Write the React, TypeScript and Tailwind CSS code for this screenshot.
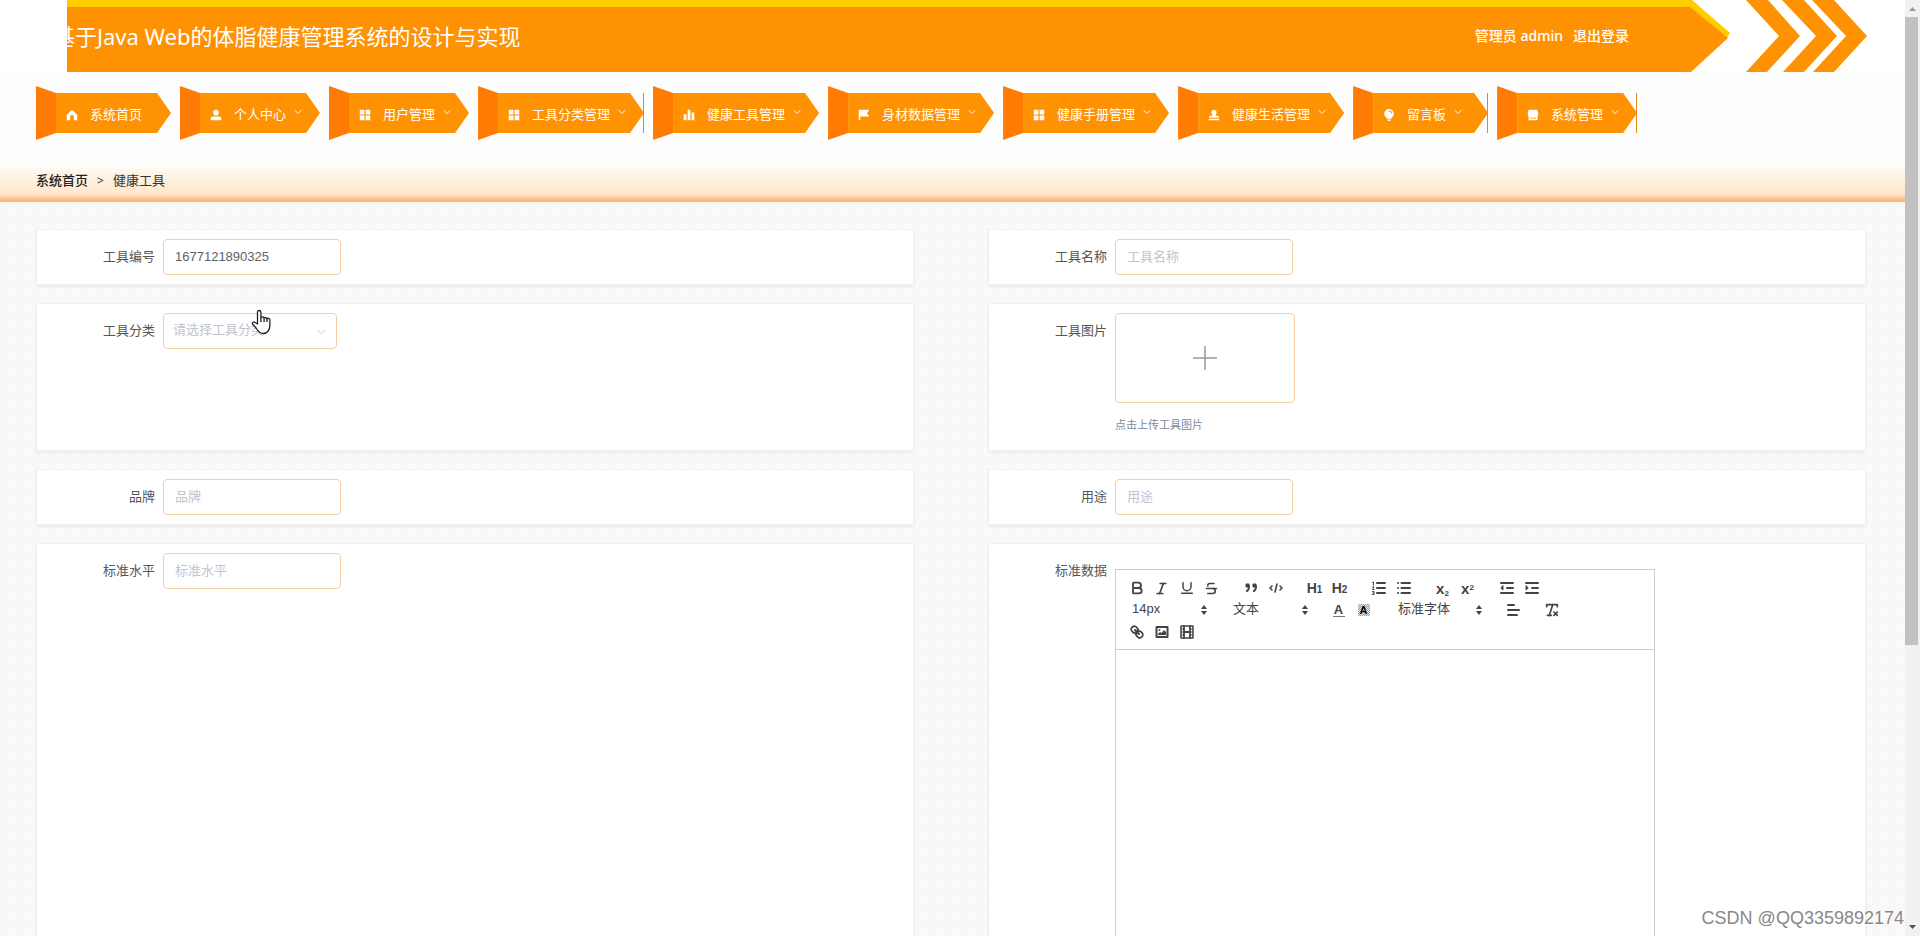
import { ReactNode } from "react"
import { Bold, Italic, Underline, Strikethrough, RemoveFormatting, ChevronDown } from "lucide-react"

const icons: Record<string, ReactNode> = {
    home: <path d="M8 1 1 7.5V15h4.6v-4.5a2.4 2.4 0 0 1 4.8 0V15H15V7.5z" />,
    user: <path d="M8 1a3.8 3.8 0 1 1 0 7.6A3.8 3.8 0 0 1 8 1zM1 15v-2.5C1 10.800 2.500 10 4.500 10h7c2 0 3.500.8 3.500 2.500V15z" />,
    grid: <path d="M1 1h6.200v6.200H1zM8.800 1H15v6.200H8.800zM1 8.800h6.200V15H1zM8.800 8.800H15V15H8.800z" />,
    data: <path d="M1 7h3.600v8H1zM6.200 1h3.600v14H6.200zM11.400 4.500H15V15h-3.600z" />,
    flag: <path d="M1 1h14l-3 4.500 3 4.500H3v5H1z" />,
    stamp: <path d="M8 1a3.600 3.600 0 0 1 2.200 6.400V9h3.300l1.500 2.500H1L2.500 9h3.300V7.400A3.600 3.600 0 0 1 8 1zM1 13h14v2H1z" />,
    bulb: <path d="M8 0a6.300 6.300 0 0 1 3.300 11.700V13H4.700v-1.300A6.300 6.300 0 0 1 8 0zM5.500 14h5l-1 2h-3zM8 2v1.200A3.200 3.200 0 0 1 11.200 6h1.200A4.500 4.500 0 0 0 8 2z" fillRule="evenodd" />,
    shop: <path d="M3 1h10c1 0 2 3 2 5.500 0 1.500-.5 2.500-1 2.500v5q0 1-1 1H3q-1 0-1-1V9C1.500 9 1 8 1 6.500 1 4 2 1 3 1zM4 11.500v1.200h8v-1.200z" fillRule="evenodd" />,
}

const menus = [
    { title: "系统首页", icon: "home", sub: false },
    { title: "个人中心", icon: "user", sub: true },
    { title: "用户管理", icon: "grid", sub: true },
    { title: "工具分类管理", icon: "grid", sub: true, line: true },
    { title: "健康工具管理", icon: "data", sub: true },
    { title: "身材数据管理", icon: "flag", sub: true },
    { title: "健康手册管理", icon: "grid", sub: true },
    { title: "健康生活管理", icon: "stamp", sub: true },
    { title: "留言板", icon: "bulb", sub: true, line: true },
    { title: "系统管理", icon: "shop", sub: true, line: true },
]

const Header = () => {
    return (
        <header className="flex h-[72px] bg-white pl-[67px] pr-[38px] text-white">
            <div className="relative flex flex-1 items-center justify-between">
                <div className="absolute inset-0 bg-[#ffcc00] [clip-path:polygon(0_0,calc(100%_-_38px)_0,100%_33px,calc(100%_-_4px)_39px,0_39px)]"></div>
                <div className="absolute inset-0 bg-[#ff9203] [clip-path:polygon(0_7px,calc(100%_-_40px)_7px,calc(100%_-_2px)_38px,calc(100%_-_39px)_100%,0_100%)]"></div>
                <h1 className="relative -ml-[14px] text-[22px] whitespace-nowrap">基于Java Web的体脂健康管理系统的设计与实现</h1>
                <div className="relative mr-[101px] flex gap-[10px] text-sm font-medium">
                    <span>管理员 admin</span>
                    <a href="#logout">退出登录</a>
                </div>
            </div>
            <svg className="ml-4 h-[72px] w-[121px]" viewBox="0 0 121 72" fill="#ff9203">
                <path d="M0 0h22l32 36-33 36H0l33-36zM36 0h22l33 36-33 36H37l33-36zM66 0h22l33 36-33 36H67l33-36z" />
            </svg>
        </header>
    )
}

const NavItem = ({ title, icon, sub, line }: any) => {
    return (
        <a href="#menu" className="relative flex h-[54px] min-w-[135px]">
            <span className="w-5 bg-[#ff7b03] [clip-path:polygon(0_0,100%_7px,100%_47px,0_100%)]"></span>
            <span className="my-[7px] flex flex-1 items-center bg-[#ff9203] pl-[10px] pr-4 pt-1 [clip-path:polygon(0_0,calc(100%_-_14px)_0,100%_50%,calc(100%_-_14px)_100%,0_100%)]">
                <svg className="mr-3 size-3" viewBox="0 0 16 16" fill="#fff">{icons[icon]}</svg>
                <span className="whitespace-nowrap text-[13px] text-white">{title}</span>
                {sub && <ChevronDown className="-mt-[6px] ml-[6px] size-3 text-white" strokeWidth={2} />}
            </span>
            {line && <span className="absolute inset-y-[7px] right-0 w-px bg-[#e08a1c]"></span>}
        </a>
    )
}

const Card = ({ label, id, children }: any) => {
    return (
        <div className="flex border border-[#f0f0f0] bg-white py-[9px] shadow-[0_2px_4px_rgba(0,0,0,0.06)]">
            <label htmlFor={id} className="h-9 w-[126px] shrink-0 pr-2 text-right text-[13px] leading-9 text-[#555]">{label}</label>
            {children}
        </div>
    )
}

const TextField = ({ label, id, value }: any) => {
    return (
        <Card label={label} id={id}>
            <input id={id} type="text" defaultValue={value} placeholder={label} className="h-9 w-[178px] rounded-sm border border-[#f8cfa5] px-[11px] pb-[2px] text-[13px] text-[#606266] outline-none placeholder:text-[#c0c4cc]" />
        </Card>
    )
}

const Tool = ({ name, children }: any) => {
    return <button type="button" aria-label={name} className="flex h-[22px] w-[25px] items-center justify-center text-[#444]">{children}</button>
}

// 18x18 toolbar glyph
const Glyph = ({ children }: any) => {
    return <svg className="size-[18px]" viewBox="0 0 18 18" fill="none" stroke="#444" strokeWidth="2" strokeLinecap="round" strokeLinejoin="round">{children}</svg>
}

const Picker = ({ name, value, wide }: any) => {
    return (
        <span className={`relative flex h-[22px] items-center ${wide ? "w-[96px]" : "w-[87px]"}`}>
            <select aria-label={name} className="h-full w-full appearance-none bg-transparent pl-2 pb-[3px] text-[13px] text-[#444] outline-none">
                <option>{value}</option>
            </select>
            <svg className="pointer-events-none absolute right-1 top-[6px] h-[10px] w-[6px]" viewBox="0 0 6 10" fill="#444">
                <path d="M3 0 6 4H0zM0 6h6L3 10z" />
            </svg>
        </span>
    )
}

const Editor = () => {
    return (
        <div className="mt-4 flex w-[540px] flex-col">
            <div className="border border-[#ccc] px-2 pb-[6px] pt-[7px]">
                <div className="flex gap-[14px]">
                    <div className="flex">
                        <Tool name="bold"><Bold size={16} strokeWidth={2.75} /></Tool>
                        <Tool name="italic"><Italic size={15} strokeWidth={2.75} /></Tool>
                        <Tool name="underline"><Underline size={16} strokeWidth={2.25} /></Tool>
                        <Tool name="strike"><Strikethrough size={15} strokeWidth={2.5} /></Tool>
                    </div>
                    <div className="flex">
                        <Tool name="blockquote">
                            <Glyph>
                                <path d="M4.500 5.500h2v2h-2zM11.500 5.500h2v2h-2z" />
                                <path d="M7 7c0 4-2 5-2 5M14 7c0 4-2 5-2 5" />
                            </Glyph>
                        </Tool>
                        <Tool name="code"><Glyph><path d="M5 7 3 9l2 2M13 7l2 2-2 2M10 5l-2 8" strokeWidth="1.600" /></Glyph></Tool>
                    </div>
                    <div className="flex font-bold">
                        <Tool name="header 1"><span className="text-sm">H<span className="text-[10px]">1</span></span></Tool>
                        <Tool name="header 2"><span className="text-sm">H<span className="text-[10px]">2</span></span></Tool>
                    </div>
                    <div className="flex">
                        <Tool name="ordered list">
                            <Glyph>
                                <path d="M7 4h8M7 9h8M7 14h8" />
                                <path d="M2.500 3.500 3.500 3v3M2.500 8h1.500L2.500 10.500H4M2.500 12.500H4v3H2.500M3 14h1" strokeWidth="1" />
                            </Glyph>
                        </Tool>
                        <Tool name="bullet list"><Glyph><path d="M6.500 4H15M6.500 9H15M6.500 14H15" /><path d="M3 4h0M3 9h0M3 14h0" /></Glyph></Tool>
                    </div>
                    <div className="flex font-bold">
                        <Tool name="subscript"><span className="text-[15px] leading-none">x<sub className="text-[8px]">2</sub></span></Tool>
                        <Tool name="superscript"><span className="text-[15px] leading-none">x<sup className="text-[8px]">2</sup></span></Tool>
                    </div>
                    <div className="flex">
                        <Tool name="outdent"><Glyph><path d="M3 14h12M3 4h12M9 9h6" /><path d="M5 7v4L3 9z" fill="#444" strokeWidth="1" /></Glyph></Tool>
                        <Tool name="indent"><Glyph><path d="M3 14h12M3 4h12M9 9h6" /><path d="M3 7v4l2-2z" fill="#444" strokeWidth="1" /></Glyph></Tool>
                    </div>
                </div>
                <div className="flex gap-[14px]">
                    <Picker name="size" value="14px" />
                    <Picker name="header" value="文本" />
                    <div className="flex font-bold">
                        <Tool name="color"><span className="w-3 border-b border-[#777] text-[13px] leading-3">A</span></Tool>
                        <Tool name="background"><span className="w-3 bg-[repeating-conic-gradient(#999_0_25%,#eee_0_50%)] bg-[length:2px_2px] text-[11px] leading-3 text-black">A</span></Tool>
                    </div>
                    <Picker name="font" value="标准字体" wide />
                    <Tool name="align"><Glyph><path d="M4 4h6M4 9h11M4 14h9" /></Glyph></Tool>
                    <Tool name="clean"><RemoveFormatting size={16} strokeWidth={2.5} /></Tool>
                </div>
                <div className="flex">
                    <Tool name="link">
                        <Glyph>
                            <path d="M7 7l4 4" />
                            <path d="M8.900 4.577a3.476 3.476 0 0 1 .36 4.679A3.476 3.476 0 0 1 4.577 8.900C3.185 7.500 2.035 6.400 4.217 4.217S7.500 3.185 8.900 4.577z" strokeWidth="1.800" />
                            <path d="M13.423 9.100a3.476 3.476 0 0 0-4.679-.36 3.476 3.476 0 0 0 .36 4.679c1.392 1.392 2.500 2.542 4.679.36s1.032-3.279-.36-4.679z" strokeWidth="1.800" />
                        </Glyph>
                    </Tool>
                    <Tool name="image">
                        <Glyph>
                            <path d="M3.500 4h11v10h-11z" />
                            <circle cx="6.500" cy="7" r="1" fill="#444" stroke="none" />
                            <path d="M5 12V11l2-2 1.500 1L11 7l2 2v3z" fill="#444" stroke="none" />
                        </Glyph>
                    </Tool>
                    <Tool name="video">
                        <Glyph>
                            <path d="M3 3h12v12H3z" strokeWidth="1.500" />
                            <path d="M6 3v12M12 3v12M6 9h6" strokeWidth="1.800" />
                            <path d="M3 6h3M3 9h3M3 12h3M12 6h3M12 9h3M12 12h3" strokeWidth="1" />
                        </Glyph>
                    </Tool>
                </div>
            </div>
            <textarea id="data" className="h-[400px] resize-none border border-t-0 border-[#ccc] p-3 text-[13px] outline-none"></textarea>
        </div>
    )
}

const App = () => {
    return (
        <div className="relative flex h-screen overflow-hidden font-['Noto_Sans','Noto_Sans_CJK_SC',sans-serif]">
            <main className="min-w-0 flex-1 bg-[#f8f8f8] bg-[conic-gradient(#fbfbfb_25%,#f8f8f8_0)] bg-[length:16px_16px]">
                <Header />
                <nav className="flex h-[93px] gap-[9px] bg-[#fdfdfd] px-9 pt-[14px]">
                    {menus.map((item) => <NavItem key={item.title} {...item} />)}
                </nav>
                <div className="flex h-[37px] items-center gap-[9px] bg-[linear-gradient(#fdfdfd,#fff6e8_20%,#fee7cd_78%,#fdb06a)] px-9 pb-[5px] text-[13px] text-[#333]">
                    <a href="#home" className="font-medium text-[#222]">系统首页</a>
                    <span className="text-xs">&gt;</span>
                    <span>健康工具</span>
                </div>
                <form className="mt-[27px] grid grid-cols-2 gap-x-[74px] gap-y-[18px] pl-9 pr-[39px] font-['Liberation_Sans','Noto_Sans_CJK_SC',sans-serif]">
                    <TextField label="工具编号" id="no" value="1677121890325" />
                    <TextField label="工具名称" id="name" />
                    <Card label="工具分类" id="type">
                        <div className="relative h-9 w-[174px]">
                            <select id="type" className="h-9 w-full appearance-none rounded-sm border border-[#f8cfa5] bg-white px-[9px] pb-[2px] text-[13px] text-[#c0c4cc] outline-none">
                                <option>请选择工具分类</option>
                            </select>
                            <ChevronDown className="pointer-events-none absolute right-[9px] top-3 size-[14px] text-[#c0c4cc]" strokeWidth={1.5} />
                        </div>
                    </Card>
                    <Card label="工具图片" id="picture">
                        <div className="h-32">
                            <button id="picture" type="button" className="flex h-[90px] w-[180px] items-center justify-center rounded border border-[#f8cfa5]">
                                <svg className="size-6" viewBox="0 0 24 24" stroke="#999" strokeWidth="1.500"><path d="M12 0v24M0 12h24" /></svg>
                            </button>
                            <p className="mt-[14px] text-[11px] leading-4 text-[#7d8a9a]">点击上传工具图片</p>
                        </div>
                    </Card>
                    <TextField label="品牌" id="brand" />
                    <TextField label="用途" id="usage" />
                    <TextField label="标准水平" id="level" />
                    <Card label="标准数据" id="data">
                        <Editor />
                    </Card>
                </form>
            </main>
            <aside className="flex w-[15px] flex-col bg-[#f1f1f1]">
                <svg className="h-[17px] w-[15px]" viewBox="0 0 15 17" fill="#999"><path d="M7.500 7 11 11H4z" /></svg>
                <div className="mr-[2px] grow-[628] bg-[#c1c1c1]"></div>
                <div className="grow-[274]"></div>
                <svg className="h-[17px] w-[15px]" viewBox="0 0 15 17" fill="#505050"><path d="M4 6h7l-3.500 4z" /></svg>
            </aside>
            <svg className="absolute left-[251px] top-[309px] h-[26px] w-5" viewBox="0 0 20 26" fill="#fff" stroke="#222" strokeWidth="1.300" strokeLinejoin="round">
                <path d="M6.500 15V3.200a1.700 1.700 0 0 1 3.400 0V9c0-1.500 3-1.500 3.200.4 0-1.200 2.700-1.200 2.900.6 0-1.200 2.900-1 2.900 1v5.500c0 4-2.500 8-6.500 8-4 0-5.500-2.500-7-5L1.500 15c-.8-1.500 1.500-2.800 2.600-1.500z" />
                <path d="M9.900 9v4M13.100 9.500V13M16 10v3" fill="none" />
            </svg>
            <p className="absolute bottom-1 right-4 font-['Liberation_Sans',sans-serif] text-[18px] text-[#888] [text-shadow:1px_1px_0_#fff]">CSDN @QQ3359892174</p>
        </div>
    )
}
export default App
